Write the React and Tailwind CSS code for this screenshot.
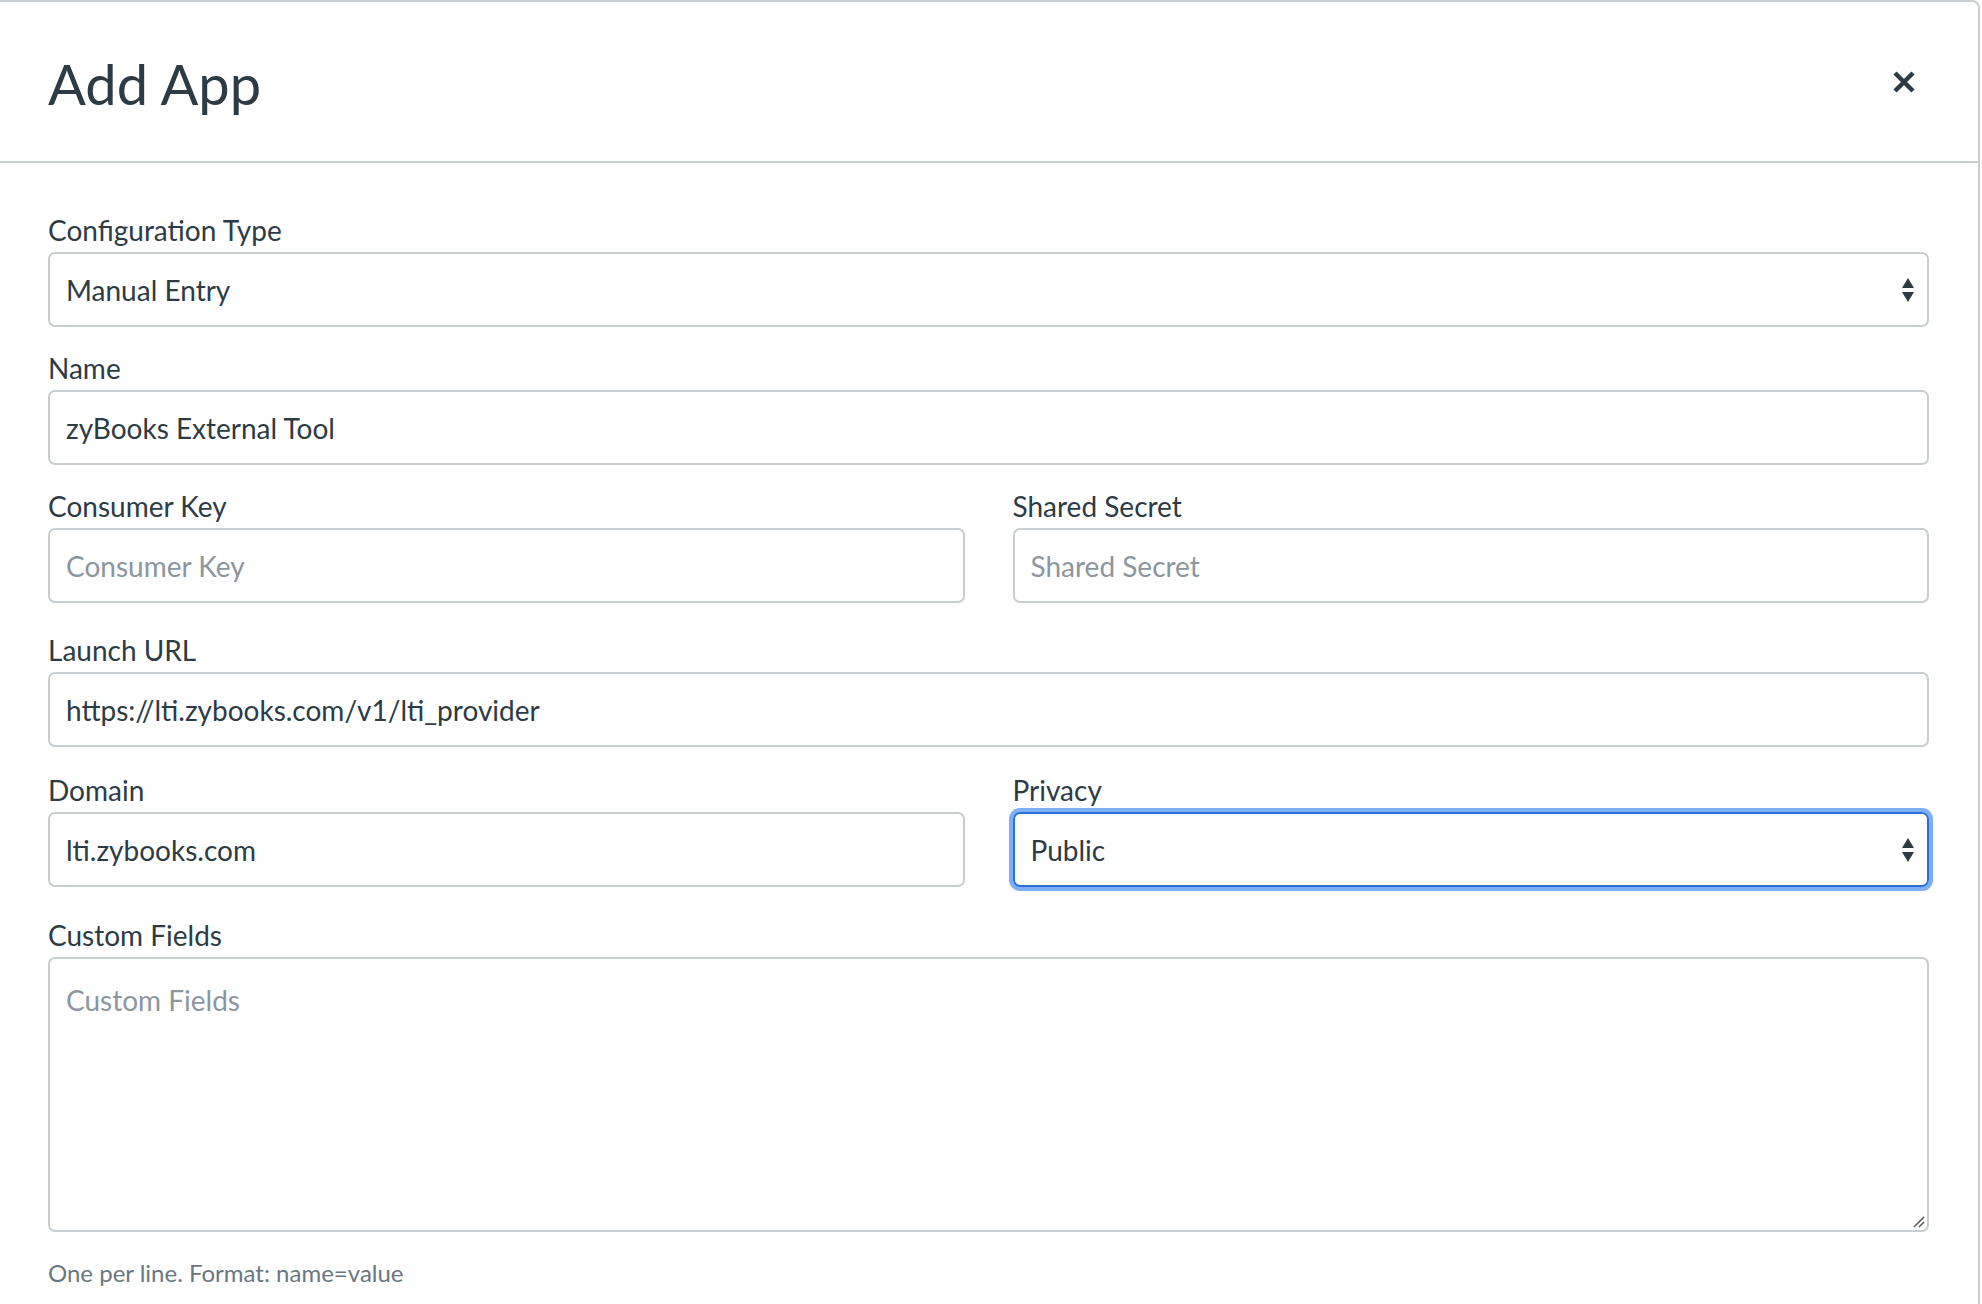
export default function App() {
  const font = { fontFamily: "Lato, 'Noto Sans', sans-serif" };
  const Arrows = () => (
    <svg width="14" height="26" viewBox="0 0 14 26" className="absolute right-[14px] top-1/2 -translate-y-1/2">
      <path d="M7 1 L13 11 L1 11 Z" fill="#2d3b45" />
      <path d="M7 25 L13 15 L1 15 Z" fill="#2d3b45" />
    </svg>
  );
  const Label = ({ children }) => <div className="text-[28px] leading-[36px] text-[#2d3b45] mb-[4px]">{children}</div>;
  const Input = ({ value, placeholder }) => (
    <div className={"h-[75px] border-2 border-[#c7cdd1] rounded-[7px] flex items-center px-[16px] text-[28px] " + (value ? "text-[#2d3b45]" : "text-[#8b969e]")}>{value || placeholder}</div>
  );
  return (
    <div style={font} className="w-[1982px] h-[1304px] bg-white overflow-hidden">
      <div className="w-[1980px] h-[1304px] border-t-2 border-r-2 border-[#c7cdd1] rounded-tr-[8px]">
        <div className="h-[161px] border-b-2 border-[#c7cdd1] flex items-center justify-between pl-[48px] pr-[62px]">
          <div className="text-[56px] text-[#2d3b45] pt-[4px]">Add App</div>
          <svg width="24" height="24" viewBox="0 0 24 24"><path d="M3 3 L21 21 M21 3 L3 21" stroke="#2d3b45" strokeWidth="4.5" /></svg>
        </div>
        <div className="pl-[48px] pr-[49px] pt-[49px]">
          <Label>Configuration Type</Label>
          <div className="relative"><Input value="Manual Entry" /><Arrows /></div>
          <div className="mt-[23px]"><Label>Name</Label><Input value="zyBooks External Tool" /></div>
          <div className="mt-[23px] grid grid-cols-2 gap-x-[48px]">
            <div><Label>Consumer Key</Label><Input placeholder="Consumer Key" /></div>
            <div><Label>Shared Secret</Label><Input placeholder="Shared Secret" /></div>
          </div>
          <div className="mt-[29px]"><Label>Launch URL</Label><Input value="https://lti.zybooks.com/v1/lti_provider" /></div>
          <div className="mt-[25px] grid grid-cols-2 gap-x-[48px]">
            <div><Label>Domain</Label><Input value="lti.zybooks.com" /></div>
            <div><Label>Privacy</Label>
              <div className="relative">
                <div className="h-[75px] border-2 border-[#2b6fd6] rounded-[7px] flex items-center px-[16px] text-[28px] text-[#2d3b45] shadow-[0_0_0_4px_#7eaef5]">Public</div>
                <Arrows />
              </div>
            </div>
          </div>
          <div className="mt-[30px]"><Label>Custom Fields</Label>
            <div className="relative h-[275px] border-2 border-[#c7cdd1] rounded-[7px] px-[16px] pt-[20px] text-[28px] text-[#8b969e]">
              Custom Fields
              <svg width="14" height="14" viewBox="0 0 14 14" className="absolute right-[2px] bottom-[2px]"><path d="M13 3 L3 13 M13 8 L8 13" stroke="#555" strokeWidth="1.5" /></svg>
            </div>
          </div>
          <div className="mt-[23px] text-[24px] text-[#6b7780]">One per line. Format: name=value</div>
        </div>
      </div>
    </div>
  );
}
